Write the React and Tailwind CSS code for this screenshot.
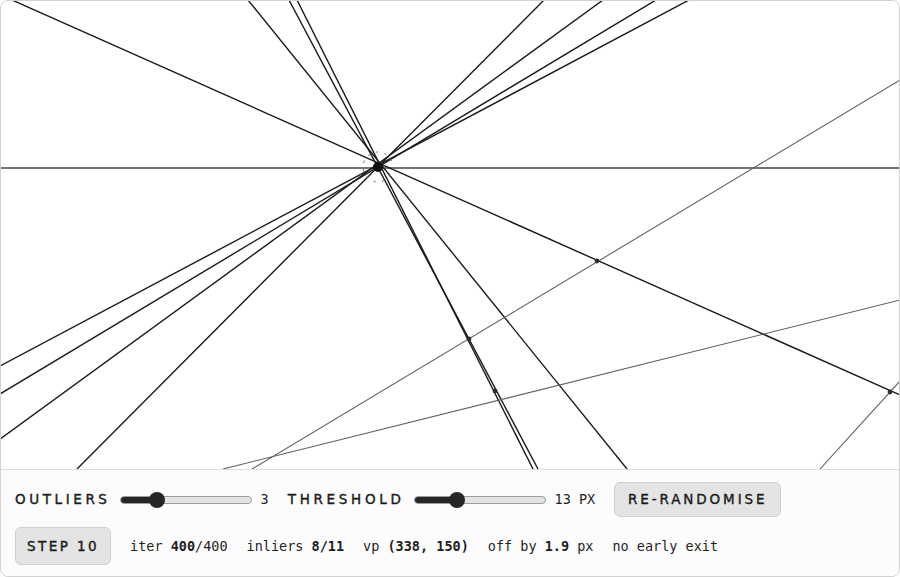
import React from 'react';

// segments in canvas pixel space (x1, y1, x2, y2)
const inliers = [
  [12, 0, 900, 395],
  [248, 0, 627, 469],
  [289, 0, 538, 469],
  [297, 0, 533, 469],
  [544, 0, 77, 469],
  [603, 0, 0, 439],
  [656, 0, 0, 394],
  [689, 0, 0, 366],
];

const outliers = [
  [252, 469, 900, 80],
  [223, 469, 900, 300],
  [820, 469, 900, 381],
];

const crossings = [
  [469, 339],
  [495, 391],
  [597, 261],
  [890, 392],
];

const vp = [378, 167];

const display =
  "font-['DejaVu_Sans',sans-serif] font-normal uppercase text-[13.5px] text-[#1c1c1c] [-webkit-text-stroke:0.4px_#1c1c1c]";
const mono = "font-['DejaVu_Sans_Mono',monospace] text-[13.5px] text-[#1f1f1f]";

function Slider({ value, min, max }) {
  const left = 8 + (116 * (value - min)) / (max - min);
  return (
    <div className="relative flex h-4 w-[132px] items-center">
      <div className="h-2 w-full overflow-hidden rounded-full border border-[#9c9c9c] bg-[#e3e3e3]">
        <div className="h-full bg-[#262626]" style={{ width: left }} />
      </div>
      <div
        className="absolute top-0 h-4 w-4 -translate-x-1/2 rounded-full bg-[#262626]"
        style={{ left }}
      />
    </div>
  );
}

function Scene() {
  return (
    <svg viewBox="1 1 898 468" className="block h-full w-full" preserveAspectRatio="none">
      <rect x="0" y="0" width="900" height="470" fill="#ffffff" />
      <line x1="0" y1="168" x2="900" y2="168" stroke="#474747" strokeWidth="1.7" />
      {inliers.map(([x1, y1, x2, y2], i) => (
        <line key={i} x1={x1} y1={y1} x2={x2} y2={y2} stroke="#1a1a1a" strokeWidth="1.4" />
      ))}
      {outliers.map(([x1, y1, x2, y2], i) => (
        <line key={i} x1={x1} y1={y1} x2={x2} y2={y2} stroke="#626262" strokeWidth="1.1" />
      ))}
      {crossings.map(([cx, cy], i) => (
        <circle key={i} cx={cx} cy={cy} r="2.4" fill="#2e2e2e" />
      ))}
      {/* threshold ring around the estimate */}
      <circle
        cx={vp[0]}
        cy={vp[1]}
        r="15"
        fill="none"
        stroke="#777777"
        strokeWidth="1"
        strokeDasharray="2.5 6"
      />
      <circle cx={vp[0]} cy={vp[1]} r="5" fill="#111111" />
    </svg>
  );
}

export default function App() {
  return (
    <div className="flex h-screen w-full flex-col overflow-hidden rounded-lg border border-[#d2d2d2] bg-white">
      <div className="min-h-0 flex-1">
        <Scene />
      </div>

      <div className="flex flex-col gap-[10px] border-t border-[#dcdcdc] bg-[#fcfcfc] px-[14px] pb-[11px] pt-[12px]">
        <div className="flex h-[35px] items-center gap-[19px]">
          <div className="flex items-center gap-[9px]">
            <span className={`${display} tracking-[3.6px]`}>Outliers</span>
            <Slider value={3} min={0} max={12} />
            <span className={mono}>3</span>
          </div>
          <div className="flex items-center gap-[9px]">
            <span className={`${display} tracking-[3.7px]`}>Threshold</span>
            <Slider value={13} min={1} max={40} />
            <span className={mono}>13 PX</span>
          </div>
          <button className={`${display} h-[35px] w-[167px] rounded-md border border-[#d0d0d0] bg-[#e4e4e4] tracking-[2.9px]`}>
            Re-randomise
          </button>
        </div>

        <div className="flex h-[38px] items-center gap-[19px]">
          <button className={`${display} h-[38px] w-[96px] rounded-md border border-[#d0d0d0] bg-[#e4e4e4] tracking-[2.4px]`}>
            Step 10
          </button>
          <span className={mono}>
            iter <b>400</b>/400
          </span>
          <span className={mono}>
            inliers <b>8/11</b>
          </span>
          <span className={mono}>
            vp <b>(338, 150)</b>
          </span>
          <span className={mono}>
            off by <b>1.9</b> px
          </span>
          <span className={mono}>no early exit</span>
        </div>
      </div>
    </div>
  );
}
